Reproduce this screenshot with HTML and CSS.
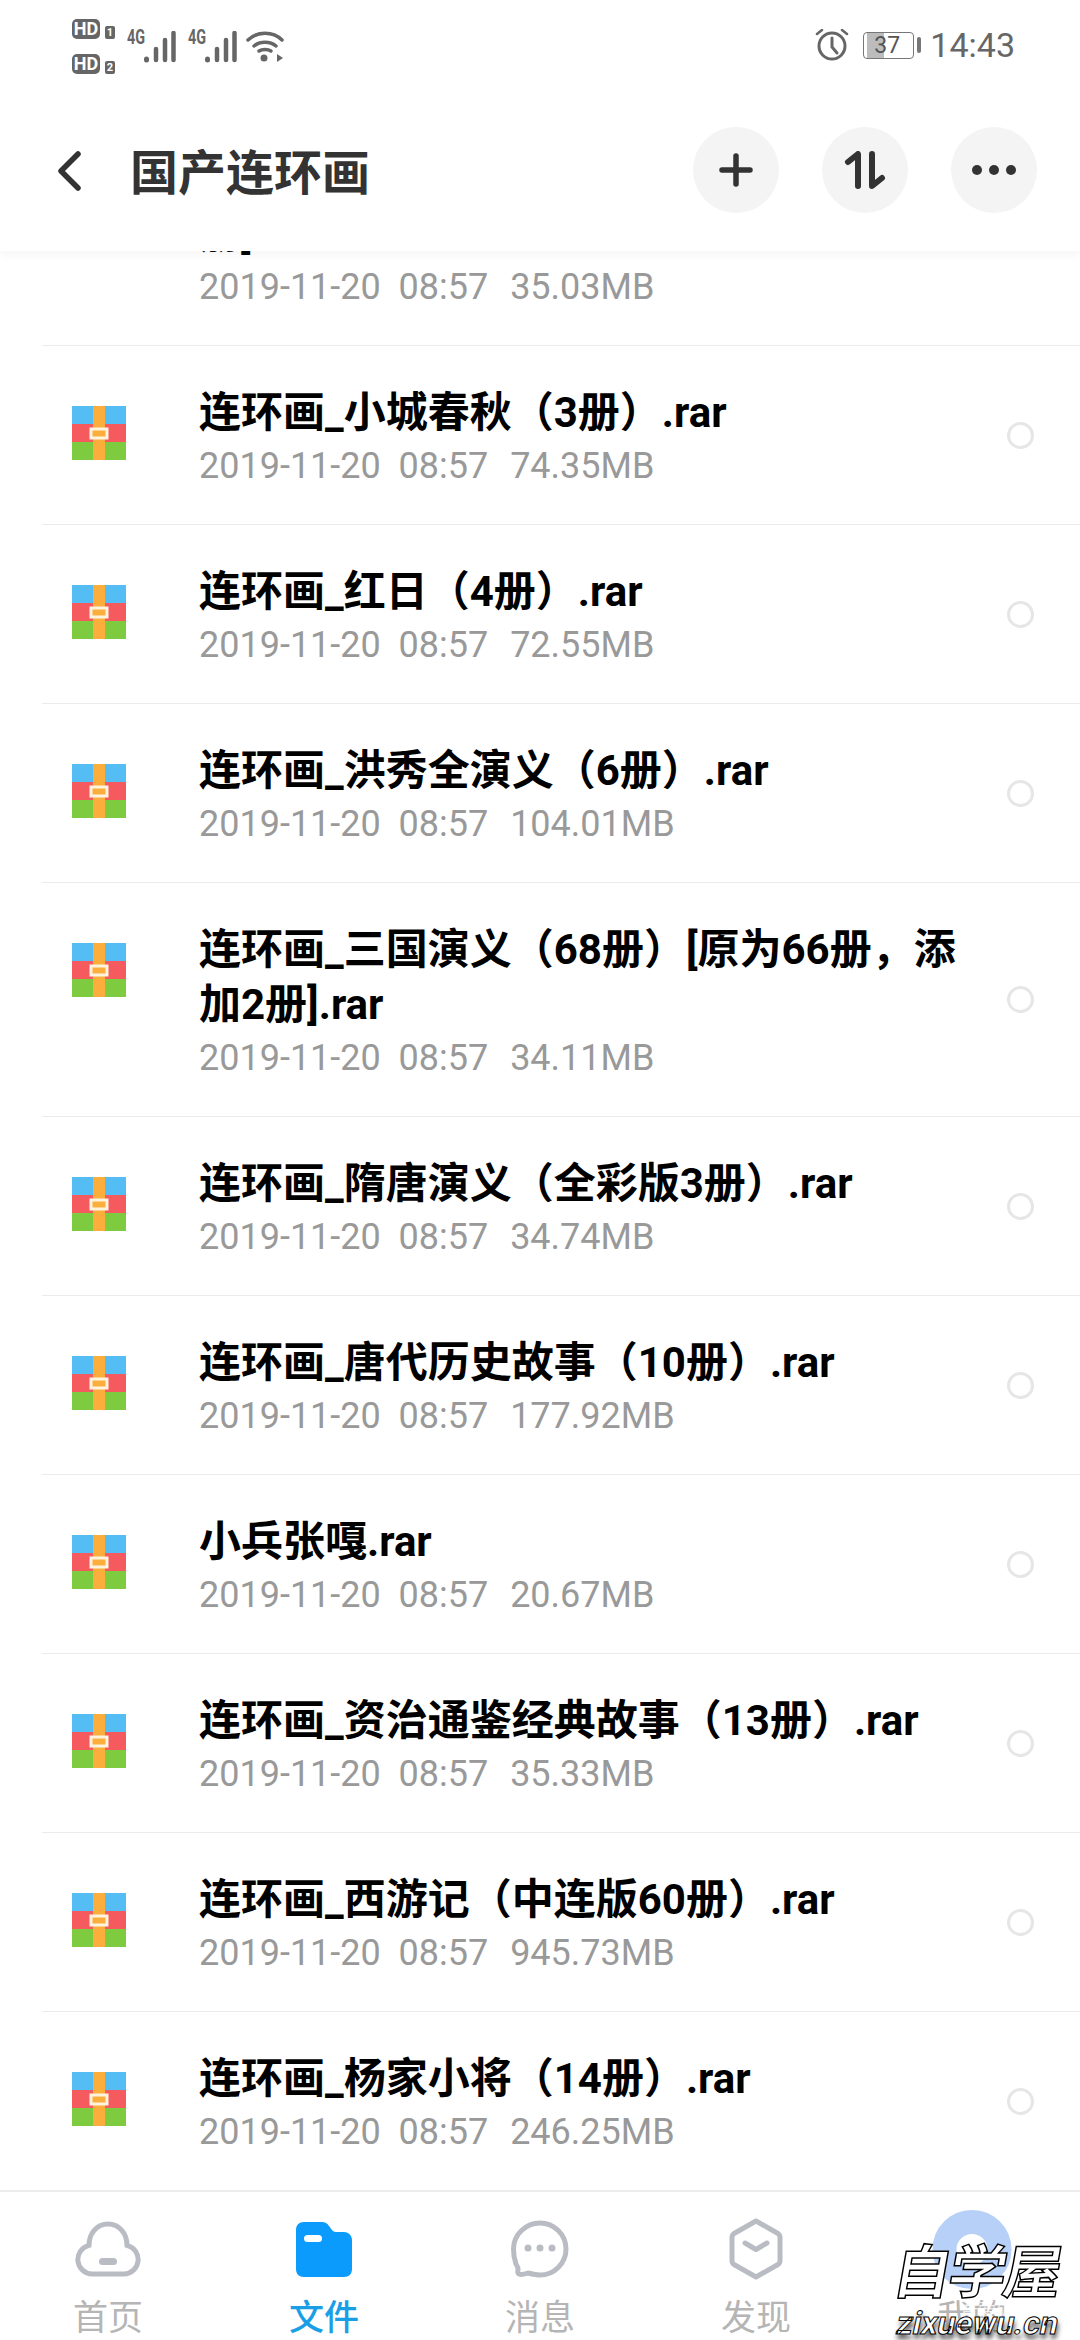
FILE: index.html
```html
<!DOCTYPE html>
<html lang="zh-CN">
<head>
    <meta charset="UTF-8">
    <meta name="viewport" content="width=device-width, initial-scale=1.0">
    <title>国产连环画</title>
    <link rel="stylesheet" href="styles.css">
</head>
<body>
    <svg class="defs">
        <symbol id="rar" viewBox="0 0 54 54">
            <clipPath id="rar-clip"><rect width="54" height="54" rx="4"/></clipPath>
            <g clip-path="url(#rar-clip)">
                <rect width="54" height="18" fill="#54bdf4"/>
                <rect y="18" width="54" height="18" fill="#f55b5e"/>
                <rect y="36" width="54" height="18" fill="#7fcb40"/>
                <rect x="21" width="12" height="54" fill="#fbae3c"/>
                <rect x="19" y="23" width="16" height="9" fill="#fbae3c" stroke="#fdf3df" stroke-width="3"/>
            </g>
        </symbol>
    </svg>

    <div class="phone">
        <header class="header">
            <div class="status-bar">
                <div class="status-left">
                    <div class="hd-col">
                        <div class="hd-line"><span class="hd">HD</span><span class="sim">1</span></div>
                        <div class="hd-line"><span class="hd">HD</span><span class="sim">2</span></div>
                    </div>
                    <div class="net">
                        <span class="net-label">4G</span>
                        <svg width="32" height="32" viewBox="0 0 32 32"><g fill="none" stroke="#666" stroke-linecap="round"><path d="M2.500 28v1" stroke-width="5"/><path d="M12 18v11" stroke-width="4.500"/><path d="M21 9v20" stroke-width="4.500"/><path d="M29.500 2v27" stroke-width="4.500"/></g></svg>
                    </div>
                    <div class="net">
                        <span class="net-label">4G</span>
                        <svg width="32" height="32" viewBox="0 0 32 32"><g fill="none" stroke="#666" stroke-linecap="round"><path d="M2.500 28v1" stroke-width="5"/><path d="M12 18v11" stroke-width="4.500"/><path d="M21 9v20" stroke-width="4.500"/><path d="M29.500 2v27" stroke-width="4.500"/></g></svg>
                    </div>
                    <svg class="wifi" width="38" height="32" viewBox="0 0 38 32"><g fill="none" stroke="#666" stroke-width="3.500" stroke-linecap="round"><path d="M2 9c9-9 25-9 34 0"/><path d="M8 15c6-5 16-5 22 0"/><path d="M13 20c3-2 9-2 12 0"/></g><circle cx="18" cy="27" r="3.500" fill="#666"/><path d="M31 23l6 4-6 4z" fill="#666"/></svg>
                </div>
                <div class="status-right">
                    <svg width="34" height="32" viewBox="0 0 34 32"><g fill="none" stroke="#666" stroke-width="3" stroke-linecap="round"><circle cx="17" cy="17" r="13"/><path d="M17 9v9l5 6"/><path d="M2 5l5-4M32 5l-5-4" stroke-width="2.500"/></g></svg>
                    <div class="battery"><div class="battery-fill"></div><span class="battery-num">37</span></div>
                    <div class="battery-nub"></div>
                    <span class="time">14:43</span>
                </div>
            </div>
            <div class="toolbar">
                <svg class="back" width="24" height="40" viewBox="0 0 24 40"><path d="M20 3L3 20l17 17" fill="none" stroke="#333" stroke-width="5.500" stroke-linecap="round" stroke-linejoin="round"/></svg>
                <h1 class="page-title">国产连环画</h1>
                <div class="tool-buttons">
                    <div class="tool-btn"><svg width="34" height="34" viewBox="0 0 34 34"><path d="M17 3v28M3 17h28" stroke="#333" stroke-width="5.500" stroke-linecap="round"/></svg></div>
                    <div class="tool-btn"><svg width="42" height="38" viewBox="0 0 42 38"><g fill="none" stroke="#333" stroke-width="6" stroke-linecap="round" stroke-linejoin="round"><path d="M4 11l10-8v32"/><path d="M28 3v32l10-8"/></g></svg></div>
                    <div class="tool-btn"><svg width="46" height="12" viewBox="0 0 46 12"><circle cx="6" cy="6" r="5" fill="#333"/><circle cx="23" cy="6" r="5" fill="#333"/><circle cx="40" cy="6" r="5" fill="#333"/></svg></div>
                </div>
            </div>
        </header>

        <main class="file-list">
            <div class="file-row first-row">
                <svg class="rar-icon"><use href="#rar"/></svg>
                <div class="file-info">
                    <div class="file-name">连环画_中国古典名著故事集[全本共十六册].rar</div>
                    <div class="file-meta">2019-11-20&nbsp; 08:57&nbsp; <span class="file-size">35.03MB</span></div>
                </div>
                <div class="radio"></div>
            </div>
            <div class="file-row">
                <svg class="rar-icon"><use href="#rar"/></svg>
                <div class="file-info">
                    <div class="file-name">连环画_小城春秋（3册）.rar</div>
                    <div class="file-meta">2019-11-20&nbsp; 08:57&nbsp; <span class="file-size">74.35MB</span></div>
                </div>
                <div class="radio"></div>
            </div>
            <div class="file-row">
                <svg class="rar-icon"><use href="#rar"/></svg>
                <div class="file-info">
                    <div class="file-name">连环画_红日（4册）.rar</div>
                    <div class="file-meta">2019-11-20&nbsp; 08:57&nbsp; <span class="file-size">72.55MB</span></div>
                </div>
                <div class="radio"></div>
            </div>
            <div class="file-row">
                <svg class="rar-icon"><use href="#rar"/></svg>
                <div class="file-info">
                    <div class="file-name">连环画_洪秀全演义（6册）.rar</div>
                    <div class="file-meta">2019-11-20&nbsp; 08:57&nbsp; <span class="file-size">104.01MB</span></div>
                </div>
                <div class="radio"></div>
            </div>
            <div class="file-row">
                <svg class="rar-icon"><use href="#rar"/></svg>
                <div class="file-info">
                    <div class="file-name">连环画_三国演义（68册）[原为66册，添加2册].rar</div>
                    <div class="file-meta">2019-11-20&nbsp; 08:57&nbsp; <span class="file-size">34.11MB</span></div>
                </div>
                <div class="radio"></div>
            </div>
            <div class="file-row">
                <svg class="rar-icon"><use href="#rar"/></svg>
                <div class="file-info">
                    <div class="file-name">连环画_隋唐演义（全彩版3册）.rar</div>
                    <div class="file-meta">2019-11-20&nbsp; 08:57&nbsp; <span class="file-size">34.74MB</span></div>
                </div>
                <div class="radio"></div>
            </div>
            <div class="file-row">
                <svg class="rar-icon"><use href="#rar"/></svg>
                <div class="file-info">
                    <div class="file-name">连环画_唐代历史故事（10册）.rar</div>
                    <div class="file-meta">2019-11-20&nbsp; 08:57&nbsp; <span class="file-size">177.92MB</span></div>
                </div>
                <div class="radio"></div>
            </div>
            <div class="file-row">
                <svg class="rar-icon"><use href="#rar"/></svg>
                <div class="file-info">
                    <div class="file-name">小兵张嘎.rar</div>
                    <div class="file-meta">2019-11-20&nbsp; 08:57&nbsp; <span class="file-size">20.67MB</span></div>
                </div>
                <div class="radio"></div>
            </div>
            <div class="file-row">
                <svg class="rar-icon"><use href="#rar"/></svg>
                <div class="file-info">
                    <div class="file-name">连环画_资治通鉴经典故事（13册）.rar</div>
                    <div class="file-meta">2019-11-20&nbsp; 08:57&nbsp; <span class="file-size">35.33MB</span></div>
                </div>
                <div class="radio"></div>
            </div>
            <div class="file-row">
                <svg class="rar-icon"><use href="#rar"/></svg>
                <div class="file-info">
                    <div class="file-name">连环画_西游记（中连版60册）.rar</div>
                    <div class="file-meta">2019-11-20&nbsp; 08:57&nbsp; <span class="file-size">945.73MB</span></div>
                </div>
                <div class="radio"></div>
            </div>
            <div class="file-row">
                <svg class="rar-icon"><use href="#rar"/></svg>
                <div class="file-info">
                    <div class="file-name">连环画_杨家小将（14册）.rar</div>
                    <div class="file-meta">2019-11-20&nbsp; 08:57&nbsp; <span class="file-size">246.25MB</span></div>
                </div>
                <div class="radio"></div>
            </div>
        </main>

        <nav class="bottom-nav">
            <div class="nav-item">
                <div class="nav-icon"><svg width="66" height="56" viewBox="0 0 66 56"><path d="M17 53a14.500 14.500 0 0 1-3-28.600C14 12 22 3 33 3s19 9 19 21.400A14.500 14.500 0 0 1 49 53z" fill="none" stroke="#b9bdc3" stroke-width="5"/><rect x="24" y="37" width="18" height="7" rx="3.500" fill="#b9bdc3"/></svg></div>
                <span>首页</span>
            </div>
            <div class="nav-item active">
                <div class="nav-icon"><svg width="56" height="56" viewBox="0 0 56 56"><path d="M8 1h18c3 0 5 1 7 4l3 4c1 1 2 2 4 2h8c4 0 8 3 8 8v29c0 5-3 8-8 8H8c-5 0-8-3-8-8V9c0-5 3-8 8-8z" fill="#0a9bfd"/><rect x="8" y="14" width="18" height="7" rx="3.500" fill="#fff"/></svg></div>
                <span>文件</span>
            </div>
            <div class="nav-item">
                <div class="nav-icon"><svg width="58" height="58" viewBox="0 0 58 58"><path d="M29 3c14 0 26 11.500 26 26S43 55 29 55c-4 0-8-1-12-2-3 1-7 2-9 1-2-1-1-3-1-5 0-2-1-3-2-5-1.500-4-2.500-8-2.500-15C2.500 14.500 15 3 29 3z" fill="none" stroke="#b9bdc3" stroke-width="5" stroke-linejoin="round"/><circle cx="17" cy="28" r="3.500" fill="#b9bdc3"/><circle cx="29" cy="28" r="3.500" fill="#b9bdc3"/><circle cx="41" cy="28" r="3.500" fill="#b9bdc3"/></svg></div>
                <span>消息</span>
            </div>
            <div class="nav-item">
                <div class="nav-icon"><svg width="54" height="62" viewBox="0 0 54 62"><path d="M27 3l22 12.500c1.500 1 2 2 2 4v23c0 2-.5 3-2 4L27 59 5 46.500c-1.500-1-2-2-2-4v-23c0-2 .5-3 2-4z" fill="none" stroke="#b9bdc3" stroke-width="5" stroke-linejoin="round"/><path d="M16 25l11 6.500L38 25" fill="none" stroke="#b9bdc3" stroke-width="5" stroke-linecap="round" stroke-linejoin="round"/></svg></div>
                <span>发现</span>
            </div>
            <div class="nav-item">
                <div class="avatar"></div>
                <div class="nav-icon"></div>
                <span>我的</span>
            </div>
        </nav>

        <div class="watermark">
            <div class="wm-cn">自学屋</div>
            <div class="wm-faint">吾爱破解论坛</div>
            <div class="wm-en">zixuewu.cn</div>
        </div>
    </div>
</body>
</html>
```
FILE: styles.css
```css
/* Reset and basic styles */
* {
    margin: 0;
    padding: 0;
    box-sizing: border-box;
}

body {
    font-family: Roboto, "Noto Sans CJK SC", sans-serif;
    background-color: #fff;
}

.defs {
    display: none;
}

.phone {
    position: relative;
    display: flex;
    flex-direction: column;
    width: 1080px;
    height: 2340px;
    overflow: hidden;
    background-color: #fff;
}

/* Header */
.header {
    position: relative;
    z-index: 2;
    height: 251px;
    flex-shrink: 0;
    background-color: #fff;
    box-shadow: 0 5px 8px rgba(0, 0, 0, 0.035);
}

.status-bar {
    display: flex;
    justify-content: space-between;
    height: 90px;
    padding: 19px 65px 0 72px;
}

.status-left {
    display: flex;
    align-items: flex-start;
}

.hd-col {
    display: flex;
    flex-direction: column;
    gap: 15px;
    margin-right: 12px;
}

.hd-line {
    display: flex;
    align-items: flex-end;
    gap: 5px;
    height: 20px;
}

.hd {
    width: 28px;
    height: 20px;
    border-radius: 5px;
    background-color: #666;
    color: #fff;
    font-size: 18px;
    font-weight: 700;
    line-height: 20px;
    text-align: center;
}

.sim {
    width: 10px;
    height: 13px;
    border-radius: 2px;
    background-color: #666;
    color: #fff;
    font-size: 11px;
    font-weight: 700;
    line-height: 13px;
    text-align: center;
}

.net {
    display: flex;
    align-items: flex-start;
    width: 61px;
    padding-top: 9px;
}

.net-label {
    width: 17px;
    color: #666;
    font-size: 20px;
    font-weight: 700;
    line-height: 18px;
    transform: scaleX(0.72);
    transform-origin: left;
}

.net svg {
    margin-top: 3px;
}

.wifi {
    margin-top: 12px;
    margin-left: -3px;
}

.status-right {
    display: flex;
    align-items: flex-start;
    padding-top: 10px;
}

.battery {
    position: relative;
    width: 51px;
    height: 27px;
    margin: 3px 0 0 14px;
    border: 1px solid #777;
    border-radius: 4px;
    overflow: hidden;
}

.battery-fill {
    width: 17px;
    height: 100%;
    margin-left: 3px;
    background-color: #bcbcbc;
}

.battery-num {
    position: absolute;
    top: 0;
    left: 10px;
    color: #555;
    font-size: 23px;
    line-height: 25px;
}

.battery-nub {
    width: 4px;
    height: 16px;
    margin: 8px 0 0 3px;
    border-radius: 2px;
    background-color: #777;
}

.time {
    margin: -1px 0 0 9px;
    color: #666;
    font-size: 34px;
    line-height: 34px;
}

/* Toolbar */
.toolbar {
    display: flex;
    align-items: center;
    height: 161px;
    padding: 0 43px 1px 58px;
}

.back {
    margin-top: 1px;
}

.page-title {
    margin: -2px 0 0 48px;
    color: #333;
    font-size: 48px;
    font-weight: 700;
}

.tool-buttons {
    display: flex;
    gap: 43px;
    margin-left: auto;
}

.tool-btn {
    display: flex;
    align-items: center;
    justify-content: center;
    width: 86px;
    height: 86px;
    border-radius: 50%;
    background-color: #f4f4f4;
}

/* File list */
.file-list {
    flex: 1;
    min-height: 0;
    overflow: hidden;
}

.file-row {
    display: flex;
    align-items: center;
    margin-left: 42px;
    padding: 39px 46px 31px 30px;
    border-bottom: 1px solid #ebebeb;
}

.first-row {
    margin-top: -139px;
}

.rar-icon {
    flex-shrink: 0;
    align-self: flex-start;
    width: 54px;
    height: 54px;
    margin: 21px 73px 0 0;
}

.file-info {
    flex: 1;
    min-width: 0;
    padding-right: 31px;
}

.file-name {
    color: #000;
    font-size: 42px;
    font-weight: 700;
    line-height: 55px;
}

.file-meta {
    color: #999;
    font-size: 36px;
    line-height: 53px;
}

.file-size {
    margin-left: 4px;
}

.radio {
    flex-shrink: 0;
    width: 27px;
    height: 27px;
    margin-top: -8px;
    border: 3px solid #e6e6e6;
    border-radius: 50%;
}

/* Bottom nav */
.bottom-nav {
    position: relative;
    z-index: 2;
    display: grid;
    grid-template-columns: repeat(5, 1fr);
    height: 150px;
    flex-shrink: 0;
    padding-top: 28px;
    border-top: 2px solid #ececec;
    background-color: #fff;
}

.nav-item {
    position: relative;
    display: flex;
    flex-direction: column;
    align-items: center;
    color: #b5b5b5;
    font-size: 35px;
    line-height: 36px;
}

.nav-icon {
    display: flex;
    align-items: center;
    justify-content: center;
    height: 58px;
    margin-bottom: 23px;
}

.nav-item.active {
    color: #1a9ee6;
    font-weight: 500;
}

.avatar {
    position: absolute;
    top: -10px;
    left: 50%;
    width: 79px;
    height: 79px;
    border: 24px solid #b7d0f8;
    border-radius: 50%;
    transform: translateX(-50%);
}

/* Watermark sits over the tab bar */
.watermark {
    position: absolute;
    z-index: 3;
    left: 897px;
    top: 2241px;
    width: 180px;
}

.wm-cn {
    margin-left: -3px;
    color: #fff;
    font-size: 58px;
    font-weight: 700;
    line-height: 64px;
    letter-spacing: -3px;
    white-space: nowrap;
    -webkit-text-stroke: 1.5px #000;
    transform: skewX(-10deg);
}

.wm-faint {
    position: absolute;
    top: 59px;
    left: 63px;
    color: rgba(255, 255, 255, 0.8);
    font-size: 18px;
    line-height: 20px;
    white-space: nowrap;
}

.wm-en {
    position: relative;
    margin-top: 7px;
    color: #fff;
    font-size: 32px;
    font-weight: 700;
    line-height: 22px;
    white-space: nowrap;
    -webkit-text-stroke: 1px #000;
    text-shadow: 2px 5px 5px rgba(0, 0, 0, 0.7);
    transform: skewX(-12deg);
}
```
